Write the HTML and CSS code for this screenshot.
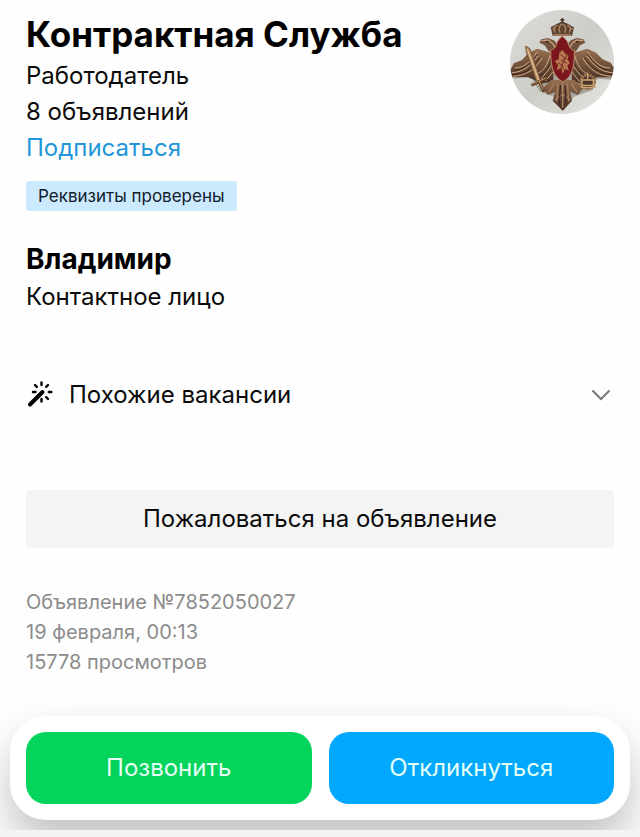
FILE: index.html
```html
<!DOCTYPE html>
<html lang="ru">
<head>
    <meta charset="UTF-8">
    <meta name="viewport" content="width=device-width, initial-scale=1.0">
    <title>Контрактная Служба</title>
    <link rel="stylesheet" href="styles.css">
</head>
<body>
    <main class="content">
        <section class="employer">
            <div class="employer-info">
                <h1>Контрактная Служба</h1>
                <p>Работодатель</p>
                <p>8 объявлений</p>
                <a class="subscribe" href="#">Подписаться</a>
                <span class="badge">Реквизиты проверены</span>
            </div>
            <svg class="avatar" viewBox="30 30 312 312" role="img" aria-label="Эмблема">
                <defs>
                    <linearGradient id="backdrop" x1="0" y1="0" x2="1" y2="1">
                        <stop offset="0" stop-color="#dddcd8"/>
                        <stop offset="0.5" stop-color="#cdcdc8"/>
                        <stop offset="1" stop-color="#e6e6e1"/>
                    </linearGradient>
                    <linearGradient id="bronze" x1="0" y1="0" x2="0" y2="1">
                        <stop offset="0" stop-color="#96704f"/>
                        <stop offset="1" stop-color="#452d23"/>
                    </linearGradient>
                    <clipPath id="circle"><circle cx="186" cy="186" r="156"/></clipPath>
                </defs>
                <g clip-path="url(#circle)">
                    <rect x="30" y="30" width="312" height="312" fill="url(#backdrop)"/>
                    <path d="M34 238 90 226 118 274 164 292 190 332 222 290 278 270 292 236 342 240 342 220 250 200 120 200Z" fill="#a6a59c"/>
                    <!-- wings -->
                    <path d="M152 158 112 146 86 158 66 180 42 190 28 214 36 232 84 232 104 240 120 252 160 244 160 190Z" fill="url(#bronze)"/>
                    <path d="M222 158 262 146 288 158 308 178 332 188 348 212 338 232 290 232 270 242 250 252 216 244 214 190Z" fill="url(#bronze)"/>
                    <g fill="none" stroke="#d3ad86" stroke-width="3">
                        <path d="M36 218C72 216 92 196 114 168M44 204C74 204 92 184 112 156M38 229C82 226 104 210 126 174M110 222C130 214 142 196 150 166M122 238 156 196M136 244 160 214"/>
                        <path d="M338 218C302 216 282 196 260 168M330 204C300 204 282 184 262 156M336 229C292 226 270 210 248 174M264 222C244 214 232 196 224 166M252 238 218 196M238 244 214 214"/>
                    </g>
                    <g fill="none" stroke="#432b23" stroke-width="3">
                        <path d="M36 224C78 222 98 204 120 172M42 211C72 210 92 190 112 162M116 231C136 220 148 204 154 174"/>
                        <path d="M338 224C296 222 276 204 254 172M332 211C302 210 282 190 262 162M258 231C238 220 226 204 220 174"/>
                    </g>
                    <!-- heads -->
                    <path d="M168 164 146 154 134 136 118 128 124 118 144 114 164 122 178 144Z" fill="#74543f"/>
                    <path d="M206 164 228 154 240 136 256 128 250 118 230 114 210 122 196 144Z" fill="#74543f"/>
                    <path d="M124 122 144 120 158 130 166 144M250 122 230 120 216 130 208 144" fill="none" stroke="#c9a27c" stroke-width="4"/>
                    <circle cx="142" cy="125" r="3" fill="#2e1c16"/>
                    <circle cx="232" cy="125" r="3" fill="#2e1c16"/>
                    <!-- tail and legs -->
                    <path d="M154 240 126 266 144 284 166 276 158 302 188 332 216 302 210 276 234 284 252 262 222 240Z" fill="url(#bronze)"/>
                    <path d="M188 246V324M174 250 170 304M202 250 206 304M162 252 146 276M214 252 232 276M164 300 188 282 210 300" fill="none" stroke="#a98262" stroke-width="4"/>
                    <path d="M181 256 178 314M195 256 198 314" fill="none" stroke="#3d271f" stroke-width="4"/>
                    <!-- crown -->
                    <path d="M158 108 152 82 170 72 187 64 204 72 222 82 216 108Z" fill="#5e4232"/>
                    <path d="M166 98C158 88 162 80 172 76M180 98C174 84 178 76 187 72C196 76 200 84 194 98M208 98C216 88 212 80 202 76M160 105H214M158 84 166 90M218 84 208 90" fill="none" stroke="#b08a66" stroke-width="4"/>
                    <path d="M187 54V70M181 60H193" stroke="#49352a" stroke-width="5"/>
                    <!-- shield -->
                    <path d="M187 108C180 116 172 120 169 134C166 146 158 148 152 152C152 196 158 230 189 246C218 230 224 196 223 152C214 148 208 144 205 132C202 120 194 116 187 108Z" fill="#7c1720" stroke="#b98c6c" stroke-width="3"/>
                    <path d="M178 158 188 150 194 160 206 168 202 178 210 190 202 196 206 212 196 206 188 222 184 204 170 210 174 194 164 184 176 178Z" fill="#b87a50"/>
                    <path d="M182 164 196 174 184 182 200 190M174 188 186 196 192 210M204 160 178 212" fill="none" stroke="#7b3025" stroke-width="3"/>
                    <!-- sword -->
                    <path d="M77 138 90 146 122 240 110 246 78 154Z" fill="#b48b61" stroke="#543728" stroke-width="2"/>
                    <path d="M82 148 116 240" stroke="#e8c99e" stroke-width="3"/>
                    <path d="M98 254 138 236M118 244 130 272" stroke="#614029" stroke-width="9" stroke-linecap="round"/>
                    <path d="M98 252 138 234M119 246 129 268" stroke="#c79c69" stroke-width="3" stroke-linecap="round"/>
                    <!-- wreath -->
                    <circle cx="263" cy="246" r="21" fill="#49332a" stroke="#a77b51" stroke-width="8" stroke-dasharray="6 2"/>
                    <path d="M246 240H280V256H246ZM263 218V238M242 262H288" fill="none" stroke="#cda773" stroke-width="4"/>
                </g>
            </svg>
        </section>

        <section class="contact">
            <h2>Владимир</h2>
            <p>Контактное лицо</p>
        </section>

        <button class="similar" type="button" aria-expanded="false">
            <svg class="wand" viewBox="0 0 28 28" aria-hidden="true">
                <path d="M4 23.500 16.500 11" stroke-width="4"/>
                <path d="M15.500 1.500V4M22 4 20.200 5.800M22.800 11H25.300M20.200 16.200 22 18M15.500 18V20.500M7 11H9.500M9 4 10.800 5.800" stroke-width="2.400"/>
            </svg>
            <span>Похожие вакансии</span>
            <svg class="chevron" viewBox="0 0 20 20" aria-hidden="true">
                <path d="M2 6 10 14 18 6"/>
            </svg>
        </button>

        <button class="report" type="button">Пожаловаться на объявление</button>

        <div class="meta">
            <p>Объявление №7852050027</p>
            <p>19 февраля, 00:13</p>
            <p>15778 просмотров</p>
        </div>
    </main>

    <footer class="footer">
        <div class="actions">
            <button class="call" type="button">Позвонить</button>
            <button class="respond" type="button">Откликнуться</button>
        </div>
    </footer>
</body>
</html>
```
FILE: styles.css
```css
* {
    box-sizing: border-box;
    margin: 0;
    padding: 0;
}

body {
    display: flex;
    flex-direction: column;
    min-height: 100vh;
    font-family: Inter, 'Liberation Sans', sans-serif;
    font-size: 24px;
    line-height: 36px;
    color: #0b0b0b;
    background-color: #fefefe;
}

button {
    border: none;
    font: inherit;
    color: inherit;
    cursor: pointer;
}

.content {
    padding: 10px 26px 0;
}

.employer {
    display: flex;
    justify-content: space-between;
}

.employer-info {
    display: flex;
    flex-direction: column;
    align-items: flex-start;
}

h1 {
    font-size: 35px;
    line-height: 48px;
    color: #000;
}

h2 {
    font-size: 28px;
    line-height: 40px;
    color: #000;
}

.subscribe {
    color: #2196d9;
    text-decoration: none;
}

.badge {
    margin-top: 15px;
    padding: 0 12px;
    font-size: 17px;
    line-height: 30px;
    border-radius: 3px;
    color: #10202c;
    background-color: #cceafe;
}

.avatar {
    flex: none;
    width: 104px;
    height: 104px;
}

.contact {
    margin-top: 28px;
}

.similar {
    display: flex;
    align-items: center;
    width: 100%;
    margin-top: 62px;
    text-align: left;
    background: none;
}

.similar span {
    flex: 1;
}

.similar svg {
    fill: none;
    stroke-linecap: round;
}

.wand {
    width: 28px;
    height: 28px;
    margin-right: 15px;
    stroke: #000;
}

.chevron {
    width: 20px;
    height: 20px;
    margin-right: 3px;
    stroke: #777;
    stroke-width: 2;
}

.report {
    width: 100%;
    margin-top: 77px;
    padding: 11px;
    border-radius: 4px;
    background-color: #f4f4f4;
}

.meta {
    margin-top: 39px;
    font-size: 20px;
    line-height: 30px;
    color: #8c8c8c;
}

.footer {
    margin-top: auto;
    padding: 38px 10px 10px;
    border-bottom: 7px solid #f3f3f3;
    overflow: hidden;
}

.actions {
    display: flex;
    gap: 17px;
    padding: 16px;
    border-radius: 36px;
    background-color: #fff;
    box-shadow: 0 24px 44px rgba(0, 0, 0, 0.24);
}

.actions button {
    flex: 1;
    padding: 18px 0;
    border-radius: 20px;
    color: #e6fff6;
}

.actions .call {
    background-color: #04d45c;
}

.actions .respond {
    background-color: #00a8ff;
}
```
